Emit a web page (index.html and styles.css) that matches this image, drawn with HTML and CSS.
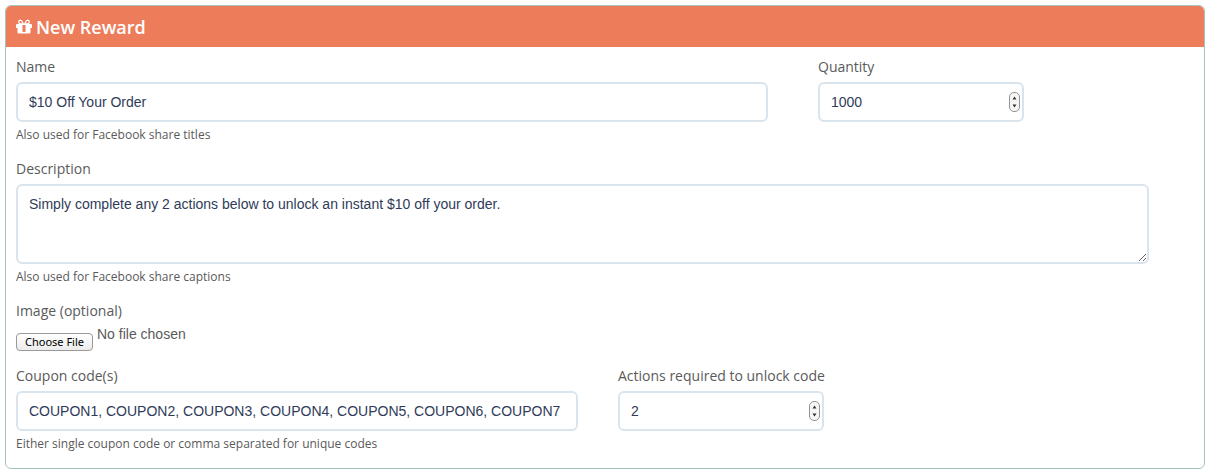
FILE: index.html
```html
<!DOCTYPE html>
<html lang="en">
<head>
    <meta charset="UTF-8">
    <meta name="viewport" content="width=device-width, initial-scale=1.0">
    <title>New Reward</title>
    <link rel="stylesheet" href="styles.css">
</head>
<body>
    <form class="panel">
        <h1 class="panel-header">
            <svg class="gift-icon" viewBox="0 0 16 15" aria-hidden="true">
                <path fill-rule="evenodd" d="M1 5h14a1 1 0 0 1 1 1v3h-1.500v4.500a1 1 0 0 1-1 1h-11a1 1 0 0 1-1-1V9H0V6a1 1 0 0 1 1-1zM6.500 6v7h3V6z"/>
                <path class="bow" d="M7.300 4.800H4.500a1.800 1.800 0 0 1 0-3.600C5.800 1.200 6.500 3 7.300 4.800zM8.700 4.800h2.800a1.800 1.800 0 0 0 0-3.600C10.200 1.200 9.500 3 8.700 4.800z"/>
            </svg>
            New Reward
        </h1>
        <div class="panel-body">
            <div class="row row-name">
                <div class="field">
                    <label for="name">Name</label>
                    <input type="text" id="name" class="control" value="$10 Off Your Order">
                    <p class="help">Also used for Facebook share titles</p>
                </div>
                <div class="field">
                    <label for="quantity">Quantity</label>
                    <input type="number" id="quantity" class="control number" value="1000">
                </div>
            </div>
            <div class="field field-description">
                <label for="description">Description</label>
                <textarea id="description" class="control">Simply complete any 2 actions below to unlock an instant $10 off your order.</textarea>
                <p class="help">Also used for Facebook share captions</p>
            </div>
            <div class="field">
                <label for="image">Image (optional)</label>
                <input type="file" id="image" class="file">
            </div>
            <div class="row row-coupons">
                <div class="field">
                    <label for="coupons">Coupon code(s)</label>
                    <input type="text" id="coupons" class="control" value="COUPON1, COUPON2, COUPON3, COUPON4, COUPON5, COUPON6, COUPON7">
                    <p class="help">Either single coupon code or comma separated for unique codes</p>
                </div>
                <div class="field">
                    <label for="actions">Actions required to unlock code</label>
                    <input type="number" id="actions" class="control number" value="2">
                </div>
            </div>
        </div>
    </form>
</body>
</html>
```
FILE: styles.css
```css
* {
    box-sizing: border-box;
}
body {
    margin: 5px;
    background-color: #fff;
    color: #5a5a5a;
    font-family: "Open Sans", sans-serif;
    font-size: 14px;
    line-height: 20px;
}
.panel {
    border: 1px solid #a6c5bc;
    border-radius: 6px;
    overflow: hidden;
}
.panel-header {
    display: flex;
    align-items: center;
    gap: 4px;
    height: 41px;
    margin: 0;
    padding: 0 10px;
    background-color: #ed7c5a;
    color: #fff;
    font-size: 18px;
    font-weight: 600;
}
.gift-icon {
    width: 16px;
    height: 15px;
    fill: #fff;
}
.gift-icon .bow {
    fill: none;
    stroke: #fff;
    stroke-width: 1.2;
    stroke-linejoin: round;
}
.panel-body {
    padding: 10px 10px 0;
}
.row {
    display: grid;
}
.row-name {
    grid-template-columns: 2fr 1fr;
    column-gap: 50px;
}
.row-coupons {
    grid-template-columns: 281fr 288fr;
    column-gap: 40px;
}
.field {
    min-width: 0;
    margin-bottom: 14px;
}
.field-description {
    margin-right: 45px;
}
label {
    display: block;
    margin-bottom: 5px;
}
.control {
    display: block;
    width: 100%;
    height: 40px;
    padding: 0 11px;
    border: 2px solid #dae4ec;
    border-radius: 6px;
    background-color: #fff;
    color: #2f3b59;
    font-family: "Liberation Sans", Arial, sans-serif;
    font-size: 14px;
    line-height: 20px;
    outline: none;
}
textarea.control {
    height: 80px;
    padding: 8px 11px;
    resize: both;
}
.number {
    width: 206px;
    max-width: 100%;
    padding-right: 2px;
}
.number::-webkit-inner-spin-button {
    appearance: none;
    width: 11px;
    height: 20px;
    opacity: 1;
    background: url("data:image/svg+xml,%3Csvg xmlns='http://www.w3.org/2000/svg' viewBox='0 0 11 20'%3E%3Crect x='.5' y='.5' width='10' height='19' rx='4.500' fill='%23f6f6f6' stroke='%23949494'/%3E%3Cpath d='M3.500 7.500h4l-2-3zM3.500 12.500h4l-2 3z' fill='%23333'/%3E%3C/svg%3E") no-repeat;
}
.help {
    margin: 3px 0 0;
    font-size: 12px;
}
.file {
    display: block;
    width: 100%;
    height: 26px;
    font-family: "Liberation Sans", Arial, sans-serif;
    font-size: 14px;
    color: #5a5a5a;
}
.file::file-selector-button {
    height: 18px;
    margin: 7px 4px 0 0;
    padding: 0 8px;
    border: 1px solid #999;
    border-radius: 4px;
    background: linear-gradient(#fff, #ececec);
    color: #000;
    font-family: "Noto Sans", sans-serif;
    font-size: 11px;
    line-height: 16px;
    vertical-align: top;
}
```
